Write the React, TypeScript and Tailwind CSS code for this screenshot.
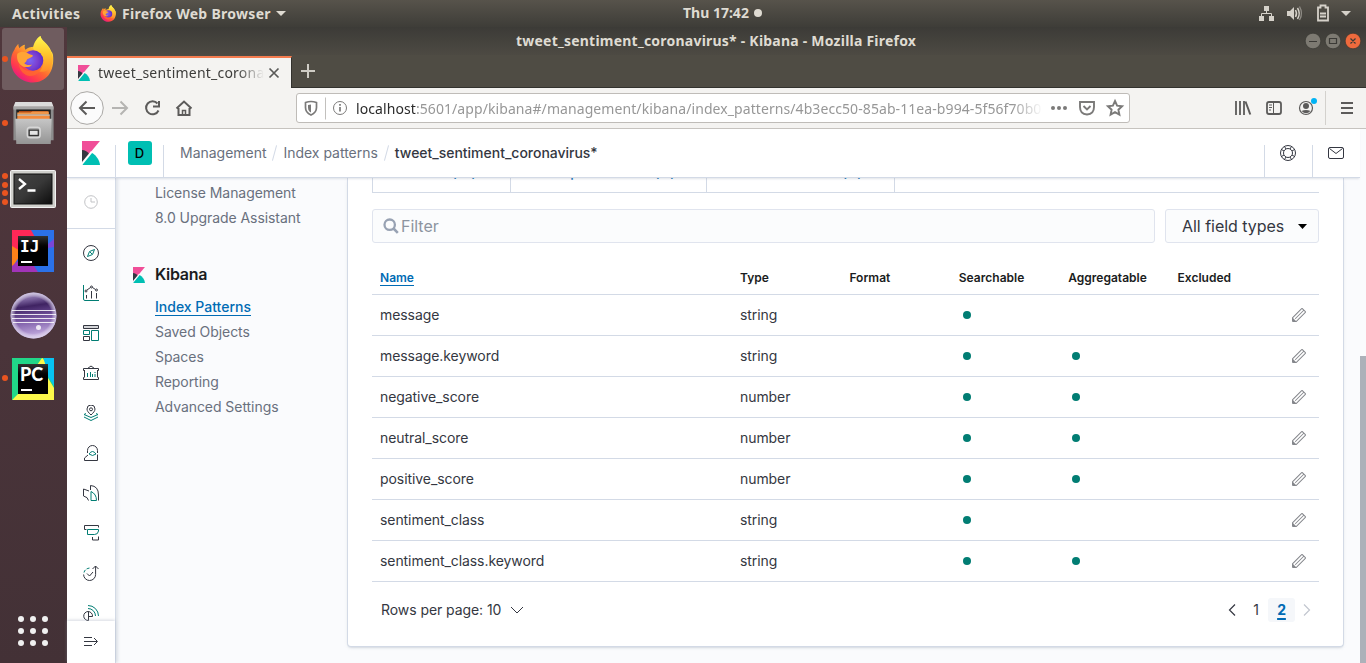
import React from "react";

const KibanaLogo = ({ className }: { className: string }) => (
  <svg className={className} viewBox="0 0 24 32" preserveAspectRatio="none">
    <path fill="#F04E98" d="M0 0v28.79L23.9.02z" />
    <path fill="#343741" d="M0 12v16.8L9.6 17.2C6.9 13.9 3.6 12 0 12z" />
    <path fill="#fff" d="M0 28l12-14.6 1.2 1L1.4 30z" opacity="0.9" />
    <path fill="#00BFB3" d="M13.4 16.1L.9 31.2V32H24c-.7-6.5-4.600-12.300-10.600-15.900z" />
  </svg>
);

const FirefoxLogo = ({ className, id }: { className: string; id: string }) => (
  <svg className={className} viewBox="0 0 46 48">
    <defs>
      <linearGradient id={id + "a"} x1="0.85" y1="0.1" x2="0.25" y2="1">
        <stop offset="0" stopColor="#fff44f" />
        <stop offset="0.3" stopColor="#ffbd2f" />
        <stop offset="0.58" stopColor="#ff6a30" />
        <stop offset="0.8" stopColor="#ff3750" />
        <stop offset="1" stopColor="#e3158a" />
      </linearGradient>
      <linearGradient id={id + "b"} x1="0.6" y1="0" x2="0.6" y2="1">
        <stop offset="0" stopColor="#fff84f" />
        <stop offset="0.5" stopColor="#ffc72d" />
        <stop offset="1" stopColor="#ff8b2b" />
      </linearGradient>
      <radialGradient id={id + "c"} cx="0.35" cy="0.5" r="0.65">
        <stop offset="0" stopColor="#7a66f5" />
        <stop offset="0.6" stopColor="#7b3fd0" />
        <stop offset="1" stopColor="#592acb" />
      </radialGradient>
    </defs>
    <path
      fill={`url(#${id}a)`}
      d="M4 14c.5-2 3.500-5 4-6 0 2 .6 3.500 1.200 4.500C10 11 13 9 15 9c-.8 1.500-.8 3 .3 5 2-2 5-3 9-3 1-6 4-9.500 6.500-11 .5 5 7.500 7 10.800 15.500 1.200 1.200 1.500 2.500 1.800 3.700C45.500 37 36 47.500 23 47.500S.5 37 .5 26C.5 21 1.700 17 4 14z"
    />
    <path
      fill={`url(#${id}b)`}
      d="M23 12c1-6 4.500-10 7.500-12 .5 5 7 7.500 10.500 15.500 1.800 3.500 2.500 7 2 10C41 38 31 37 28 36c9-5 7-16-1-20-2-1-3.500-2-4-4z"
    />
    <circle cx="23" cy="25" r="10.500" fill={`url(#${id}c)`} />
    <path fill="#ffa436" d="M7 18c4-3 9-2.500 12 .5 1.500.8 3.500 1 4 1.500-.3 2-5 3-6 4s-.5 3-3 3.500c2 2.500 5 2.500 8 1.500-1 3-8 4-11.500.5C7.500 27 6 22 7 18z" />
    <path fill="#ff6b2c" d="M8.500 27c2 6 8 9.500 14 9 5-.3 8-3 9.500-4-1.500 6-8 10-14 8.500C12 39 8.500 33 8.500 27z" opacity="0.75" />
  </svg>
);

const AppTile = ({ kind, label }: { kind: "ij" | "pc"; label: string }) => (
  <div className="relative h-[42px] w-[42px]">
    {kind === "ij" ? (
      <svg className="h-full w-full" viewBox="0 0 42 42">
        <path fill="#2b71e8" d="M0 0h42v42H0z" />
        <path fill="#ff2857" d="M0 0h19l10 18L6 30 0 17z" />
        <path fill="#ff8119" d="M0 16l10 6L0 38z" />
        <path fill="#a134b8" d="M0 36l14-12 12 18H0z" />
        <path fill="#7a47d8" d="M42 9v8L30 19z" />
      </svg>
    ) : (
      <svg className="h-full w-full" viewBox="0 0 42 42">
        <path fill="#21d789" d="M0 0h42v42H0z" />
        <path fill="#07c3f2" d="M32 0h10v28L32 12z" />
        <path fill="#fcf84a" d="M0 42l30-42c3 0 5 15 6 20l6 10v12z" />
        <path fill="#21d789" d="M0 0h29L0 28z" />
        <path fill="#a5e85c" d="M0 42V30L30 6z" />
        <path fill="#21d789" d="M0 28l8-6v12L0 42z" />
      </svg>
    )}
    <div className="absolute left-[6px] top-[6px] h-[30px] w-[30px] bg-gradient-to-b from-[#333] via-black to-black pl-[2px] pt-[2px]">
      <div className={kind === "ij" ? "font-['DejaVu_Sans_Mono',monospace] text-[16px] font-bold leading-[17px] text-white" : "font-['Lato',sans-serif] text-[18px] font-black leading-[17px] text-white"}>
        {label}
      </div>
      <div className="ml-px mt-[6px] h-[2px] w-[11px] bg-white" />
    </div>
  </div>
);

const DockItem = ({ h, dots, children, active }: { h: string; dots: number; children: React.ReactNode; active?: boolean }) => (
  <div className={"relative ml-[2px] flex w-[62px] items-center justify-center rounded-[3px] " + h + (active ? " bg-[#6f5c5f]" : "")}>
    <div className="absolute left-0 top-0 flex h-full flex-col justify-center gap-[2.500px]">
      {Array.from({ length: dots }, (_, i) => (
        <div key={i} className="h-[6px] w-[6px] rounded-full bg-[#e95420]" />
      ))}
    </div>
    {children}
  </div>
);

const Dock = () => (
  <div className="flex w-[67px] shrink-0 flex-col bg-gradient-to-b from-[#50373c] via-[#4a343a] to-[#433136]">
    <div className="h-px" />
    <DockItem h="h-[62px]" dots={1} active>
      <FirefoxLogo className="h-[47px] w-[46px]" id="dock" />
    </DockItem>
    <DockItem h="h-[66px]" dots={1}>
      <svg className="mb-[1px] h-[44px] w-[43px]" viewBox="0 0 44 46">
        <defs>
          <linearGradient id="cab" x1="0" y1="0" x2="0" y2="1">
            <stop offset="0" stopColor="#c6c6c6" />
            <stop offset="1" stopColor="#949494" />
          </linearGradient>
        </defs>
        <path fill="#8c8c8c" d="M1 6h42v35H1z" />
        <path fill="#dcdcdc" d="M3 1h38l2 5H1z" />
        <path fill="#a6a6a6" d="M1 6h42v3H1z" />
        <path fill="#1e1e1e" d="M4 9h36v11H4z" />
        <path fill="#b34a12" d="M7 10.500h30l1 3H6z" />
        <path fill="#f0974b" d="M5 12h14l2-1h17v3H5z" />
        <path fill="#fff3e4" d="M5 14h34v1.500H5z" />
        <path fill="#f48a3b" d="M5 15.500h34V19H5z" />
        <path fill="url(#cab)" d="M3 18.500h38l-1 26.500H4z" />
        <rect x="15.500" y="27.500" width="13.500" height="11" rx="3" fill="#a8a8a8" stroke="#d6d6d6" strokeWidth="1.500" />
        <rect x="17.500" y="30.500" width="9.500" height="5.500" fill="#e4e4e4" stroke="#333" strokeWidth="1.300" />
      </svg>
    </DockItem>
    <DockItem h="h-[66px]" dots={4}>
      <svg className="h-[39px] w-[47px]" viewBox="0 0 47 39">
        <defs>
          <linearGradient id="trm" x1="0" y1="0" x2="1" y2="1">
            <stop offset="0" stopColor="#444" />
            <stop offset="0.5" stopColor="#383838" />
            <stop offset="1" stopColor="#0c0c0c" />
          </linearGradient>
        </defs>
        <rect x="0.500" y="0.500" width="45" height="37" rx="1" fill="#cfcfcb" stroke="#f2f2f2" />
        <rect x="4" y="4" width="38" height="30" fill="url(#trm)" stroke="#111" />
        <path d="M9 9l6 5-6 5M17.500 20.500H25.500" fill="none" stroke="#fff" strokeWidth="2.300" />
      </svg>
    </DockItem>
    <DockItem h="h-[60px]" dots={0}>
      <div className="mb-[3px]">
        <AppTile kind="ij" label="IJ" />
      </div>
    </DockItem>
    <DockItem h="h-[66px]" dots={0}>
      <svg className="h-[47px] w-[47px]" viewBox="0 0 47 47">
        <defs>
          <linearGradient id="ecl" x1="0.350" y1="0" x2="0.500" y2="1">
            <stop offset="0" stopColor="#a593c4" />
            <stop offset="0.150" stopColor="#7c649f" />
            <stop offset="0.300" stopColor="#3f2362" />
            <stop offset="0.600" stopColor="#7b5aa6" />
            <stop offset="1" stopColor="#cdb8e8" />
          </linearGradient>
          <radialGradient id="ecg" cx="0.500" cy="0.500" r="0.500">
            <stop offset="0.780" stopColor="#fff" stopOpacity="0" />
            <stop offset="1" stopColor="#d8cfe8" stopOpacity="0.850" />
          </radialGradient>
        </defs>
        <circle cx="23.500" cy="23.500" r="23" fill="url(#ecl)" />
        <circle cx="23.500" cy="23.500" r="23" fill="url(#ecg)" />
        <path d="M2 18.500h43M1.500 22.500h44.500M2 26.500h43M3 30.500h41" stroke="#fff" strokeWidth="1.200" opacity="0.850" />
        <circle cx="28.500" cy="35.500" r="2.500" fill="#fff" opacity="0.800" />
      </svg>
    </DockItem>
    <DockItem h="h-[60px]" dots={1}>
      <div className="mt-[2px]">
        <AppTile kind="pc" label="PC" />
      </div>
    </DockItem>
    <div className="mt-auto grid grid-cols-3 gap-[6px] pb-[17px] pl-[18px] pr-[19px]">
      {Array.from({ length: 9 }, (_, i) => (
        <div key={i} className="h-[6px] w-[6px] rounded-full bg-[#f0f0f0]" />
      ))}
    </div>
  </div>
);

const TopBar = () => (
  <div className="grid h-[27px] w-full shrink-0 grid-cols-[516px_1fr_120px] items-center bg-gradient-to-b from-[#57534b] to-[#3e3d38] font-['Noto_Sans',sans-serif] text-[14px] font-bold text-[#dfdbd2]">
    <div className="flex items-center whitespace-nowrap pl-[12px]">
      <span className="w-[88px] tracking-[0.330px]">Activities</span>
      <FirefoxLogo className="h-[17px] w-[17px]" id="bar" />
      <span className="ml-[5px] w-[150px] tracking-[0.290px]">Firefox Web Browser</span>
      <svg className="ml-[4px] h-[5px] w-[10px]" viewBox="0 0 10 5">
        <path d="M0 0h10L5 5z" fill="#dfdbd2" />
      </svg>
    </div>
    <div className="-mt-[2px] flex items-center whitespace-nowrap pl-[167px]">
      <span className="w-[71px]">Thu 17:42</span>
      <span className="h-[8px] w-[8px] rounded-full bg-[#dfdbd2]" />
    </div>
    <svg className="h-[27px] w-[120px]" viewBox="0 0 120 27" fill="#d5d1c9">
      <path d="M18 6h5v5h-5zM13 16h5v5h-5zM23 16h5v5h-5z" />
      <path d="M20.500 11v3M15.500 17v-3.500h10V17" fill="none" stroke="#d5d1c9" />
      <path d="M41 11h3l4-4v13l-4-4h-3z" />
      <path d="M49.500 10q2 3.500 0 7M51.500 8q3.500 5.500 0 11" fill="none" stroke="#d5d1c9" strokeWidth="1.500" />
      <path d="M53.500 6.500q4 7 0 13.500" fill="none" stroke="#8e8b84" strokeWidth="1.300" />
      <path d="M72 7.500h2.500v-2h5v2H82V20.500H72z" fill="none" stroke="#d5d1c9" strokeWidth="1.800" />
      <path d="M74 12.500h6v2h-6zM74 15.500h6v2h-6z" />
      <path d="M95 11h10l-5 5z" />
    </svg>
  </div>
);

const TitleBar = () => (
  <div className="relative flex h-[28px] items-center justify-center bg-gradient-to-b from-[#3c3b37] to-[#4d4a43] font-['Noto_Sans',sans-serif] text-[14px] font-bold text-[#dfdbd2]">
    <span className="mb-[2px] w-[401px] whitespace-nowrap tracking-[0.225px]">tweet_sentiment_coronavirus* - Kibana - Mozilla Firefox</span>
    <svg className="absolute right-0 top-0 h-[28px] w-[66px]" viewBox="0 0 66 28">
      <circle cx="13" cy="14" r="7.800" fill="#7d7a72" stroke="#33322e" strokeWidth="0.600" />
      <circle cx="33" cy="14" r="7.800" fill="#7d7a72" stroke="#33322e" strokeWidth="0.600" />
      <circle cx="53" cy="14" r="7.800" fill="#ee6a3d" stroke="#33322e" strokeWidth="0.600" />
      <path d="M9 14.500h8M29.500 11.500h7v5h-7zM50.500 11.500l5 5M55.500 11.500l-5 5" fill="none" stroke="#3b3a36" strokeWidth="1.200" />
    </svg>
  </div>
);

const TabStrip = () => (
  <div className="flex h-[33px] items-stretch border-b border-[#33322e] bg-[#4f4c44]">
    <div className="z-10 -mb-px mt-px flex w-[225px] items-center border-r border-t-2 border-r-[#33322e] border-t-[#f57c4f] bg-[#f4f3f1] pl-[11px]">
      <KibanaLogo className="h-[16px] w-[12px]" />
      <div className="mb-[2px] ml-[8px] w-[166px] overflow-hidden whitespace-nowrap font-['Noto_Sans',sans-serif] text-[14px] tracking-[0.220px] text-[#3d3d3b] [mask-image:linear-gradient(to_right,black_84%,transparent)]">
        tweet_sentiment_coronavirus*
      </div>
      <svg className="mb-px ml-[4px] h-[12px] w-[12px]" viewBox="0 0 12 12">
        <path d="M1.500 1.500l9 9M10.500 1.500l-9 9" stroke="#5a5a58" strokeWidth="1.700" />
      </svg>
    </div>
    <svg className="ml-[9px] mt-[9px] h-[14px] w-[14px]" viewBox="0 0 14 14">
      <path d="M7 0v14M0 7h14" stroke="#cfccc5" strokeWidth="2" />
    </svg>
  </div>
);

const Toolbar = () => (
  <div className="flex h-[41px] items-center border-b border-[#c6c3bf] bg-[#f4f3f1]">
    <svg className="h-[40px] w-[229px] shrink-0" viewBox="0 0 229 40" fill="none" stroke="#5c5b5a" strokeWidth="2">
      <circle cx="20" cy="20" r="16.300" fill="#fbfbfb" stroke="#aaa8a5" strokeWidth="1" />
      <path d="M28 20H13M19.500 13.500L13 20l6.500 6.500" />
      <path d="M45 20h15M53.500 13.500L60 20l-6.500 6.500" stroke="#b5b4b2" />
      <path d="M90.500 15.500A6.500 6.500 0 1 0 91.500 22.500M92 13v5.500h-6" />
      <path d="M109.500 20.500L117 13.500l7.500 7M111.500 20v7h11v-7" />
      <path d="M115.500 27v-4.500h3V27" strokeWidth="1.500" />
    </svg>
    <div className="flex h-[30px] w-[834px] shrink-0 items-center rounded-[3px] border border-[#bfbcb8] bg-white">
      <svg className="h-[28px] w-[54px] shrink-0" viewBox="0 0 54 28" fill="none">
        <path d="M8.500 8.500q5.500-2 11 0v5q0 5-5.500 7.500-5.500-2.500-5.500-7.500z" stroke="#7b7a79" strokeWidth="1.700" />
        <path d="M14 10.500v8q-3-1.500-3-5v-2.500z" fill="#7b7a79" />
        <path d="M28.500 3.500v22" stroke="#c2c0bd" />
        <circle cx="43" cy="14" r="6.500" stroke="#7b7a79" />
        <path d="M43 13v4.500M43 10v1.800" stroke="#7b7a79" strokeWidth="1.700" />
      </svg>
      <div className="ml-[5px] w-[687px] shrink-0 overflow-hidden whitespace-nowrap font-['Noto_Sans',sans-serif] text-[14px] tracking-[0.080px] text-[#979797] [mask-image:linear-gradient(to_right,black_95.500%,transparent)]">
        <span className="text-[#2b2b2b]">localhost</span>:5601/app/kibana#/management/kibana/index_patterns/4b3ecc50-85ab-11ea-b994-5f56f70b0
      </div>
      <svg className="h-[28px] w-[86px] shrink-0" viewBox="0 0 86 28" fill="none" stroke="#7b7a79" strokeWidth="1.900">
        <circle cx="10" cy="14" r="2" fill="#7b7a79" stroke="none" />
        <circle cx="16" cy="14" r="2" fill="#7b7a79" stroke="none" />
        <circle cx="22" cy="14" r="2" fill="#7b7a79" stroke="none" />
        <path d="M37 8h14v5q0 7-7 7.500-7-.5-7-7.500z" />
        <path d="M40.500 12l3.500 3.500 3.500-3.500" />
        <path d="M72 7l2.100 4.700 5 .5-3.700 3.500 1 5L72 18.200l-4.400 2.500 1-5-3.700-3.500 5-.5z" />
      </svg>
    </div>
    <svg className="ml-auto h-[40px] w-[136px] shrink-0" viewBox="0 0 136 40" fill="none" stroke="#5c5b5a" strokeWidth="2">
      <path d="M6 13v14M10 13v14M14 13v14" strokeWidth="1.800" />
      <path d="M15.500 13.500l4.800 13" />
      <rect x="37" y="14" width="14" height="12" rx="2" strokeWidth="1.800" />
      <path d="M43.500 14v12M39 17h3M39 19.500h3M39 22h2" strokeWidth="1" />
      <circle cx="76" cy="20" r="6.500" strokeWidth="1.200" />
      <circle cx="76" cy="18" r="3" fill="#5c5b5a" stroke="none" />
      <path d="M71.500 23q4.500-2 9 0-4.500 4.500-9 0z" fill="#5c5b5a" stroke="none" />
      <circle cx="84" cy="13" r="3" fill="#00b3f4" stroke="none" />
      <path d="M95.500 3v34" stroke="#d3d1cd" strokeWidth="1" />
      <path d="M111 15h12M111 20h12M111 25h12" />
    </svg>
  </div>
);

const KibanaHeader = () => (
  <div className="relative z-20 mr-[6px] flex h-[49px] shrink-0 items-start border-b border-[#d3dae6] bg-white text-[14px] shadow-[0_2px_2px_-1px_rgba(152,162,179,0.3)]">
    <div className="flex h-full w-[48px] items-center justify-center">
      <KibanaLogo className="h-[24px] w-[18px]" />
    </div>
    <div className="mt-[16px] flex h-[32px] w-[49px] justify-center border-x border-[#d3dae6]">
      <div className="-mt-[4px] flex h-[24px] w-[24px] items-center justify-center rounded-[3px] bg-[#00bfb3] pt-[2px] text-[13px] font-medium text-black">D</div>
    </div>
    <div className="ml-[16px] flex h-[46px] items-center whitespace-nowrap tracking-[-0.020px] text-[#69707d]">
      <span>Management</span>
      <span className="mx-[8px] mt-[2px] h-[16px] w-px rotate-[15deg] bg-[#d3dae6]" />
      <span>Index patterns</span>
      <span className="mx-[8px] mt-[2px] h-[16px] w-px rotate-[15deg] bg-[#d3dae6]" />
      <span className="font-medium text-[#343741]">tweet_sentiment_coronavirus*</span>
    </div>
    <div className="ml-auto mt-[16px] flex h-[32px]">
      <div className="w-[48px] border-l border-[#d3dae6]">
        <svg className="ml-[15px] h-[16px] w-[16px]" viewBox="0 0 16 16" fill="none" stroke="#343741">
          <circle cx="8" cy="8" r="7.500" />
          <circle cx="8" cy="8" r="4.500" />
          <path d="M4.500 1.500l1.500 2.500M1.500 4.500l2.500 1.500M11.500 1.500L10 4M14.500 4.500L12 6M4.500 14.500L6 12M1.500 11.500L4 10M11.500 14.500L10 12M14.500 11.500L12 10" />
        </svg>
      </div>
      <div className="w-[48px] border-l border-[#d3dae6]">
        <svg className="ml-[15px] h-[16px] w-[16px]" viewBox="0 0 16 16" fill="none" stroke="#343741">
          <rect x="0.500" y="2.500" width="15" height="11" rx="1.500" />
          <path d="M1.500 3.500L8 8.500l6.500-5" />
        </svg>
      </div>
    </div>
  </div>
);

const D = "#343741";
const G = "#017d73";

const railIcons: React.ReactNode[] = [
  <>
    <circle cx="8" cy="8" r="7.500" stroke={D} />
    <path d="M11.500 4.500L9.500 9.500l-5 2 2-5zM7 7l2 2" stroke={G} />
  </>,
  <>
    <path d="M.5 0v14a1.500 1.500 0 0 0 1.500 1.500h14" stroke={G} />
    <path d="M3.500 10v3.500M8.500 6v7.500M13.500 8v5.500M4 5l3.500-2.500M9.500 2.500l3 2" stroke={D} />
    <circle cx="3" cy="6" r="1" stroke={D} />
    <circle cx="8.500" cy="2" r="1" stroke={D} />
    <circle cx="13.500" cy="5" r="1" stroke={D} />
  </>,
  <>
    <path d="M.5.5h15v3H.5z" stroke={D} fill="#d5d6d9" />
    <path d="M.5 11.500h6v4h-6z" stroke={D} />
    <path d="M.5 5.500h6v4h-6zM8.500 5.500h7v10h-7z" stroke={G} />
  </>,
  <>
    <path d="M1.500 5v7M14.500 5v7M.5 3.500h15V5.500h-1M1.500 5.500h-1v-2M.5 14.500h15V12.500h-1M1.500 12.500h-1v2M4.500 3.500L8 1l3.500 2.500" stroke={D} />
    <path d="M4.500 8v4M7.500 7v5M9.500 9v3M12 7v1M12 9v3" stroke={G} />
  </>,
  <>
    <path d="M8 10C5.500 7.500 4 6 4 4a4 4 0 0 1 8 0c0 2-1.500 3.500-4 6z" stroke={D} />
    <circle cx="8" cy="4.300" r="1.500" stroke={D} />
    <path d="M3 8.500l-2 1 7 3 7-3-2-1M1 12l7 3.500 7-3.500" stroke={G} />
  </>,
  <>
    <path d="M4.500 8V5.500a5 5 0 0 1 10 0V8M5 10l-3.500 3v2.500h13v-6" stroke={D} />
    <path d="M6 9q3.500-5 7 0-3.500 3-7 0z" stroke={G} />
  </>,
  <>
    <path d="M7.500 5V.5Q15.500 1 15.500 10v5.500M6 6L.5 4v7Q5 12 5.500 15.500" stroke={D} />
    <path d="M8 6.500v9h5.500Q13.500 9 8 6.500z" stroke={G} />
  </>,
  <>
    <path d="M3.500 4.500h-2v-4h14V2.500M9.500 12v3h6v-3.500" stroke={D} />
    <path d="M4.500 4.500h11v1.500q-.5 3.500-4 3.500h-7z" stroke={G} />
  </>,
  <>
    <path d="M.6 9.500a6 6 0 1 0 12 0V1M9.500 4l3-3 3 3M4 8.500l2.500 2.500L10 7" stroke={D} />
    <path d="M1 7.500Q2 3.500 7 3" stroke={G} strokeDasharray="3 1.500" />
  </>,
  <>
    <path d="M5 6.500A4.500 4.500 0 1 0 5.500 15.500V6.500M5 6.500A4.500 4.500 0 0 1 9.500 11.500H5.500" stroke={D} />
    <path d="M5 .5A10.500 10.500 0 0 1 15.500 11M5 3.500A7.500 7.500 0 0 1 12.500 11" stroke={G} />
  </>,
];

const NavRail = () => (
  <div className="relative z-10 flex w-[49px] shrink-0 flex-col border-r border-[#d3dae6] bg-white shadow-[2px_0_3px_rgba(152,162,179,0.25)]">
    <div className="flex h-[51px] items-center justify-center border-b border-[#d3dae6]">
      <svg className="-ml-px -mt-[2px] h-[14px] w-[14px]" viewBox="0 0 14 14" fill="none" stroke="#c2c3c6">
        <circle cx="7" cy="7" r="6.300" />
        <path d="M7 3v4h4" />
      </svg>
    </div>
    <div className="flex h-[392px] flex-col items-center gap-[24px] overflow-hidden pt-[16px]">
      {railIcons.map((icon, i) => (
        <svg key={i} className="h-[16px] w-[16px] shrink-0" viewBox="0 0 16 16" fill="none" strokeWidth="1">
          {icon}
        </svg>
      ))}
    </div>
    <div className="flex flex-1 items-center justify-center bg-white shadow-[0_-1px_3px_rgba(152,162,179,0.4)]">
      <svg className="mb-px h-[16px] w-[16px]" viewBox="0 0 16 16" fill="none" stroke={D}>
        <path d="M1 3.500h8M1 7.500h13M1 11.500h8M11 4L14.500 7.500 11 11" />
      </svg>
    </div>
  </div>
);

const SideNav = () => (
  <div className="w-[231px] shrink-0 pt-[2px] text-[14px] leading-[25px] tracking-[-0.060px] text-[#69707d]">
    <div className="pl-[39px]">
      <div>License Management</div>
      <div>8.0 Upgrade Assistant</div>
    </div>
    <div className="mt-[32px] flex h-[25px] items-center pl-[17px]">
      <KibanaLogo className="h-[16px] w-[12px]" />
      <span className="ml-[10px] text-[16px] font-semibold tracking-[-0.300px] text-[#1a1c21]">Kibana</span>
    </div>
    <div className="mt-[7px] pl-[39px]">
      <div className="font-medium tracking-normal text-[#006bb4] underline underline-offset-[3px]">Index Patterns</div>
      <div>Saved Objects</div>
      <div>Spaces</div>
      <div>Reporting</div>
      <div>Advanced Settings</div>
    </div>
  </div>
);

type Field = { name: string; type: string; search: boolean; agg: boolean };
const fields: Field[] = [
  { name: "message", type: "string", search: true, agg: false },
  { name: "message.keyword", type: "string", search: true, agg: true },
  { name: "negative_score", type: "number", search: true, agg: true },
  { name: "neutral_score", type: "number", search: true, agg: true },
  { name: "positive_score", type: "number", search: true, agg: true },
  { name: "sentiment_class", type: "string", search: true, agg: false },
  { name: "sentiment_class.keyword", type: "string", search: true, agg: true },
];

const Dot = () => <span className="ml-[4px] block h-[8px] w-[8px] rounded-full bg-[#017d73]" />;

const cols = "grid grid-cols-[360px_109.400px_109.400px_109.400px_109.400px_1fr_40px] items-center border-b border-[#d3dae6] [&>*]:pl-[8px] ";

const Panel = () => (
  <div className="flex h-[469px] w-[997px] shrink-0 flex-col rounded-b-[4px] border border-t-0 border-[#d3dae6] bg-white px-[24px] shadow-[0_2px_2px_-1px_rgba(152,162,179,0.3),0_1px_5px_-2px_rgba(152,162,179,0.3)]">
    <div className="flex h-[15px] items-end overflow-hidden border-b border-[#d3dae6] text-[14px] font-medium leading-[20px] text-[#006bb4] [&>div]:h-[40px] [&>div]:border-[#d3dae6] [&>div]:pt-[10px] [&>div]:text-center">
      <div className="w-[139px] border-x tracking-[0.300px]">Fields (17)</div>
      <div className="w-[196px] border-r tracking-[0.800px]">Scripted fields (0)</div>
      <div className="w-[188px] border-r tracking-[0.700px]">Source filters (0)</div>
    </div>
    <div className="mt-[16px] flex gap-[10px] text-[16px] tracking-[-0.030px]">
      <div className="flex h-[34px] w-[783px] items-center rounded-[3px] border border-[#e0e4ee] bg-[#fbfcfd] pl-[10px] text-[#8d949f]">
        <svg className="h-[16px] w-[16px]" viewBox="0 0 16 16" fill="none" stroke="#98a2b3">
          <circle cx="6.700" cy="6.700" r="5.200" strokeWidth="2.300" />
          <path d="M10.500 10.500l4.300 4.300" strokeWidth="2.600" />
        </svg>
        <span className="ml-[2px]">Filter</span>
      </div>
      <div className="flex h-[34px] w-[154px] items-center justify-between rounded-[3px] border border-[#e0e4ee] bg-[#fbfcfd] pl-[16px] pr-[11px] text-[#343741]">
        <span>All field types</span>
        <svg className="h-[5px] w-[9px]" viewBox="0 0 9 5">
          <path d="M0 0h9L4.500 5z" fill="#000" />
        </svg>
      </div>
    </div>
    <div className={cols + "h-[52px] pt-[18px] text-[12px] font-semibold leading-[16px] tracking-[0.020px] text-[#1a1c21]"}>
      <div className="text-[#006bb4] underline underline-offset-[3px]">Name</div>
      <div>Type</div>
      <div>Format</div>
      <div>Searchable</div>
      <div>Aggregatable</div>
      <div>Excluded</div>
    </div>
    {fields.map((f) => (
      <div key={f.name} className={cols + "h-[41px] text-[14px] tracking-[-0.070px] text-[#343741]"}>
        <div className="pb-[2px]">{f.name}</div>
        <div className="pb-[2px]">{f.type}</div>
        <div />
        <div>{f.search && <Dot />}</div>
        <div>{f.agg && <Dot />}</div>
        <div />
        <div>
          <svg className="ml-[4px] h-[16px] w-[16px]" viewBox="0 0 16 16" fill="#85878c">
            <path d="M12.148 3.148L11 2l-9 9v3h3l9-9-1.144-1.144-8.002 7.998a.502.502 0 01-.708 0 .502.502 0 010-.708l8.002-7.998zM11 1c.256 0 .512.098.707.293l3 3a.999.999 0 010 1.414l-9 9A.997.997 0 015 15H2a1 1 0 01-1-1v-3c0-.265.105-.52.293-.707l9-9A.997.997 0 0111 1zM5 14H2v-3l3 3z" />
          </svg>
        </div>
      </div>
    ))}
    <div className="mt-[16px] flex h-[24px] items-center pl-[9px] text-[14px] tracking-[-0.070px] text-[#343741]">
      <span className="mb-[2px]">Rows per page: 10</span>
      <svg className="ml-[9px] h-[14px] w-[14px]" viewBox="0 0 14 14" fill="none" stroke="#343741">
        <path d="M1 4l6 6 6-6" />
      </svg>
      <div className="ml-auto flex items-center">
        <svg className="h-[14px] w-[8px]" viewBox="0 0 8 14" fill="none" stroke="#343741" strokeWidth="1.200">
          <path d="M7 1.500L1.500 7 7 12.500" />
        </svg>
        <span className="mb-[2px] ml-[11px] mr-[3px] w-[18px] text-center">1</span>
        <span className="flex h-[24px] w-[27px] items-center justify-center rounded-[3px] bg-[#f5f7fa] pb-[2px] font-bold text-[#006bb4] underline decoration-2 underline-offset-[3px]">2</span>
        <svg className="ml-[8px] mr-[8px] h-[14px] w-[8px]" viewBox="0 0 8 14" fill="none" stroke="#c2c6cf" strokeWidth="1.200">
          <path d="M1 1.500L6.500 7 1 12.500" />
        </svg>
      </div>
    </div>
  </div>
);

export default function App() {
  return (
    <div className="flex h-[663px] w-[1366px] flex-col overflow-hidden">
      <TopBar />
      <div className="flex min-h-0 flex-1">
        <Dock />
        <div className="flex min-w-0 flex-1 flex-col">
          <TitleBar />
          <TabStrip />
          <Toolbar />
          <div className="flex min-h-0 flex-1 flex-col bg-[#fafbfd] font-['Inter',sans-serif]">
            <KibanaHeader />
            <div className="flex min-h-0 flex-1">
              <NavRail />
              <SideNav />
              <Panel />
              <div className="ml-auto mt-[178px] w-[6px] bg-[#acb1b9]" />
            </div>
          </div>
        </div>
      </div>
    </div>
  );
}
